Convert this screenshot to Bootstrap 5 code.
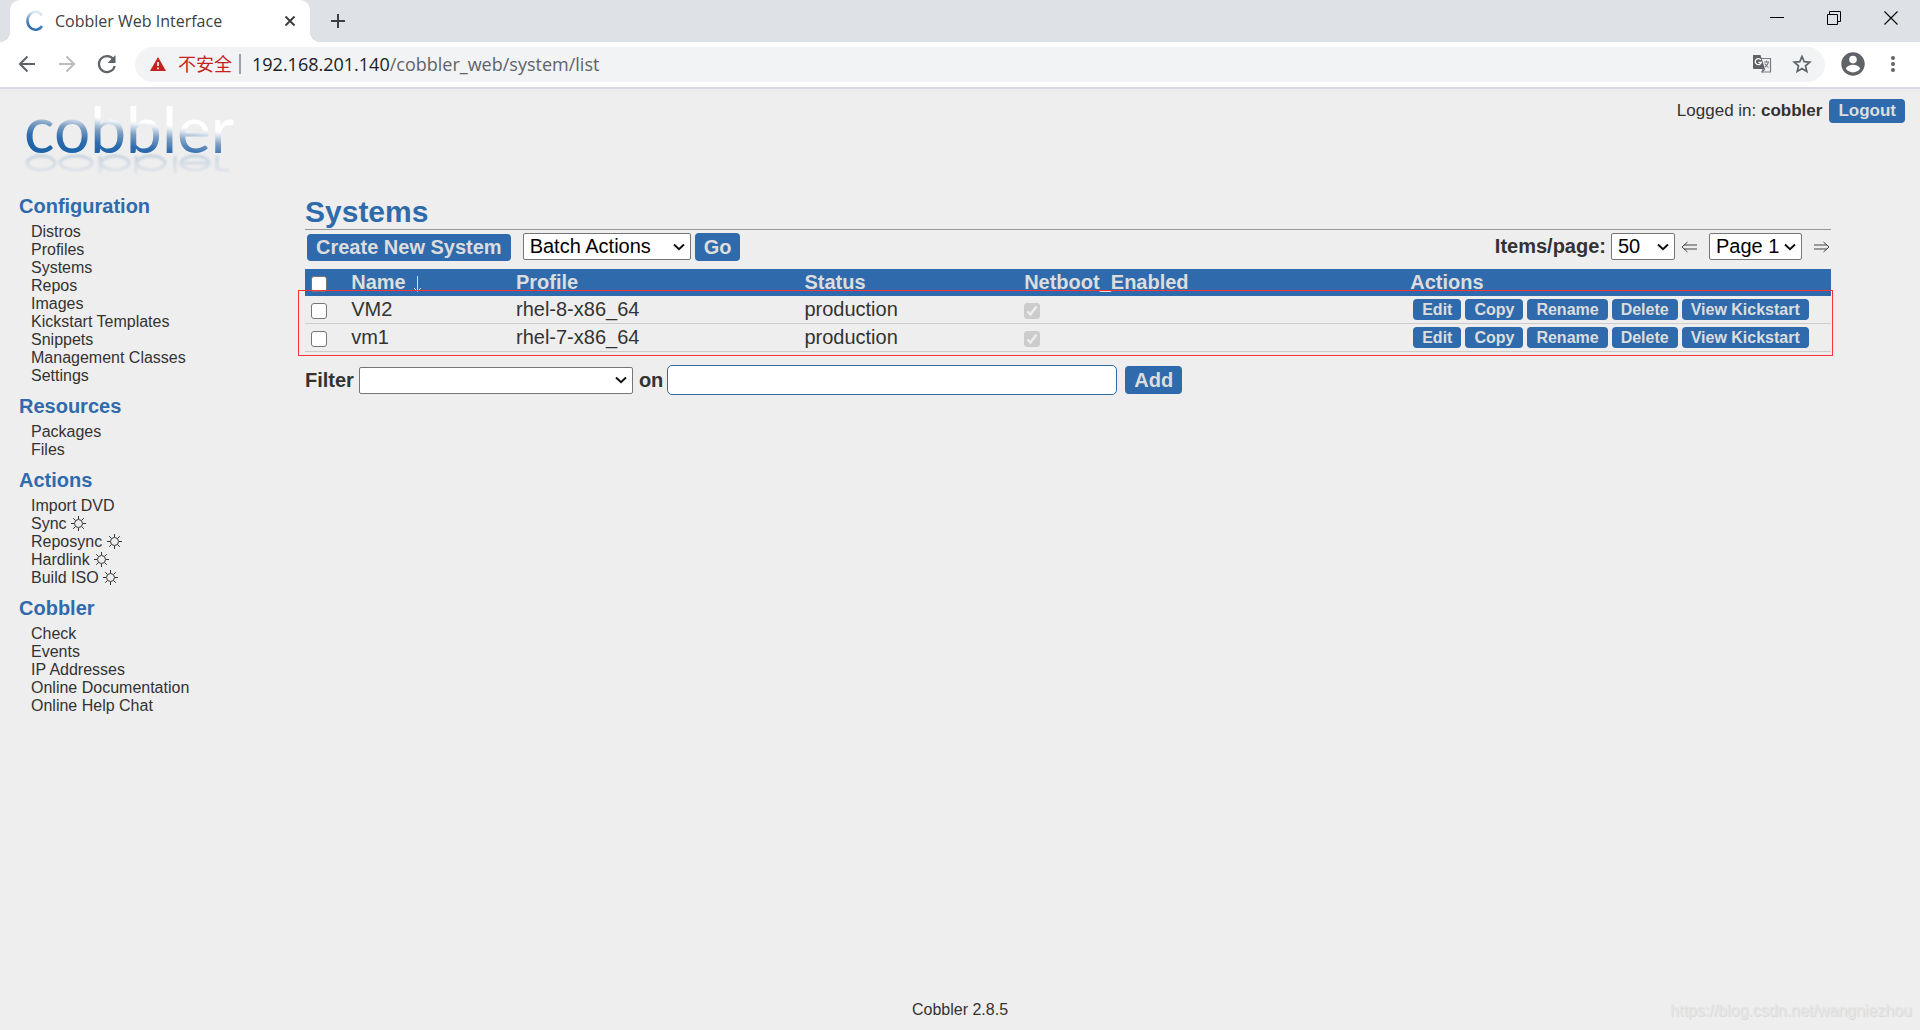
<!DOCTYPE html>
<html lang="en">
<head>
<meta charset="utf-8">
<meta name="viewport" content="width=device-width, initial-scale=1">
<title>Cobbler Web Interface</title>
<link href="https://cdn.jsdelivr.net/npm/bootstrap@5.3.0/dist/css/bootstrap.min.css" rel="stylesheet">
<style>
:root { --cob-blue: #2f6bac; --cob-bg: #eee; --cob-ink: #333; }
body { background: var(--cob-bg); color: var(--cob-ink); font: 16px/18px "Liberation Sans", Arial, sans-serif; }
svg { display: block; flex: none; }
.bare { border: 0; background: none; padding: 0; }

/* browser frame */
.chrome { font-family: "Open Sans", "Noto Sans CJK SC", sans-serif; }
.tabstrip { background: #dee1e6; height: 42px; padding-left: 10px; }
.tab-active { background: #fff; width: 300px; height: 42px; border-radius: 10px 10px 0 0; padding: 0 14px 0 15px; color: #3c4043; font-size: 16px; line-height: 20px; gap: 10px; }
.tab-active::before, .tab-active::after { content: ""; position: absolute; bottom: 0; width: 10px; height: 10px; }
.tab-active::before { left: -10px; background: radial-gradient(circle at 0 0, transparent 10px, #fff 10px); }
.tab-active::after { right: -10px; background: radial-gradient(circle at 100% 0, transparent 10px, #fff 10px); }
.win-controls { gap: 43px; padding-right: 22px; height: 36px; }
.toolbar { background: #fff; height: 47px; border-bottom: 2px solid #d9dae1; padding: 0 19px 1px 15px; }
.nav-icons { gap: 16px; margin-right: 16px; }
.omnibox { background: #f1f3f4; height: 35px; border-radius: 18px; padding: 0 13px 0 15px; font-size: 18px; line-height: 24px; }
.insecure { color: #c5221f; border-right: 2px solid #9aa0a6; line-height: 20px; padding-right: 7px; margin-right: 11px; }
.addr { color: #5f6368; }
.addr b { color: #202124; font-weight: 400; }

/* page */
.page-body { min-height: calc(100vh - 89px); }
.page-head { height: 106px; padding: 0 15px 0 20px; }
.btn-cob { background: var(--cob-blue); color: #ddd; font-weight: 700; border: 0; border-radius: 4px; padding: 0 9px; }
.btn-cob:hover { background: #265a93; color: #fff; }
.btn-out { font-size: 17px; line-height: 24px; }
.btn-row { font-size: 16px; line-height: 21px; }
.btn-big { font-size: 20px; line-height: 28px; }
.btn-new { margin: 1px 12px 0 2px; line-height: 27px; }
.session { font-size: 17px; line-height: 24px; gap: 7px; padding-top: 10px; }
.side { width: 305px; padding-left: 19px; }
.side h2 { color: var(--cob-blue); font-size: 20px; line-height: 23px; font-weight: 700; margin: 0 0 5px; }
.side ul { margin: 0 0 10px; padding-left: 12px; }
.side a { color: var(--cob-ink); text-decoration: none; }
.side li { height: 18px; }
.side svg { display: inline-block; vertical-align: -2px; }
.main-col { margin-right: 89px; font-size: 20px; line-height: 23px; }
.main-col h1 { color: var(--cob-blue); font-size: 30px; line-height: 34px; font-weight: 700; margin: 0; border-bottom: 1px solid #999; }
.tools { padding: 3px 0 8px; }
.tools .pager { gap: 5px; height: 27px; }
.pager .spaced { margin-left: 6px; }
.pick { appearance: none; border: 1px solid #767676; border-radius: 2px; height: 27px; padding: 0 22px 0 6px; font-size: 20px; line-height: 25px; color: #000;
  background: #fff url("data:image/svg+xml,%3Csvg xmlns='http://www.w3.org/2000/svg' width='12' height='8'%3E%3Cpath d='M1 1.5l5 4.7 5-4.7' fill='none' stroke='%23111' stroke-width='2'/%3E%3C/svg%3E") no-repeat right 5px center; }
.pick-batch { width: 168px; }
.pick-count { width: 64px; }
.pick-page { width: 93px; }
.pick-filter { width: 274px; margin: 0 6px 0 5px; }
.term { width: 450px; height: 30px; border: 1px solid var(--cob-blue); border-radius: 5px; background: #fff; padding: 0 6px; }
.tick { appearance: none; display: block; width: 16px; height: 16px; margin: 5px 0 0; border: 1px solid #767676; border-radius: 3px; background: #fff; }
.tick:checked { border-color: #ccc; background: #ccc url("data:image/svg+xml,%3Csvg xmlns='http://www.w3.org/2000/svg' viewBox='0 0 14 14'%3E%3Cpath d='M2.5 7.5l3 3 6-8' fill='none' stroke='%23eee' stroke-width='2.4'/%3E%3C/svg%3E") center / 14px no-repeat; }
.sys-table { width: 100%; table-layout: fixed; border-collapse: separate; border-spacing: 0; }
.sys-table th { background: var(--cob-blue); color: #ddd; height: 27px; padding: 2px 5px 0; vertical-align: top; }
.sys-table td { height: 28px; padding: 2px 5px 0; border-bottom: 1px solid #ccc; vertical-align: top; }
.sys-table th:first-child, .sys-table td:first-child { padding-left: 6px; }
.acts { gap: 4px; padding: 1px 0 0 3px; }
.redbox { border: 1px solid #f33; left: -7px; right: -2px; top: 21px; bottom: -4px; pointer-events: none; }
.filters { padding-top: 13px; font-weight: 700; }
.foot { padding-bottom: 11px; }
.stamp { right: 8px; bottom: 8px; color: #e5e5e5; text-shadow: 1px 1px 1px #d8d8d8; font-size: 16px; line-height: 22px; }
</style>
</head>
<body>
<header class="chrome">
  <div class="tabstrip d-flex">
    <div class="tab-active d-flex align-items-center position-relative">
      <svg width="20" height="22" viewBox="0 0 20 22"><defs><linearGradient id="fav" x1="0" y1="1" x2=".3" y2="0"><stop offset="0" stop-color="#1f5fa8"/><stop offset=".4" stop-color="#4a82bd"/><stop offset="1" stop-color="#dbe7f2"/></linearGradient></defs><path d="M17 5.500A8 9 0 1 0 17 16" fill="none" stroke="url(#fav)" stroke-width="2.600"/></svg>
      <span class="flex-grow-1 text-nowrap">Cobbler Web Interface</span>
      <button class="bare" type="button" aria-label="Close tab"><svg width="12" height="12" viewBox="0 0 12 12"><path d="M1.500 1.500l9 9M10.500 1.500l-9 9" stroke="#3c4043" stroke-width="2"/></svg></button>
    </div>
    <button class="bare ms-3 ps-1" type="button" aria-label="New tab"><svg width="16" height="16" viewBox="0 0 16 16"><path d="M8 1v14M1 8h14" stroke="#3c4043" stroke-width="2"/></svg></button>
    <div class="win-controls d-flex align-items-center ms-auto">
      <button class="bare" type="button" aria-label="Minimize"><svg width="14" height="14" viewBox="0 0 14 14"><path d="M0 6.500h14" stroke="#000"/></svg></button>
      <button class="bare" type="button" aria-label="Restore"><svg width="14" height="14" viewBox="0 0 14 14"><path d="M.5 3.500h10v10H.5zM2.500 3.500V.5h11v10h-3" fill="none" stroke="#000"/></svg></button>
      <button class="bare" type="button" aria-label="Close"><svg width="14" height="14" viewBox="0 0 14 14"><path d="M.5.5l13 13M13.500.5l-13 13" stroke="#000" stroke-width="1.100"/></svg></button>
    </div>
  </div>
  <div class="toolbar d-flex align-items-center">
    <div class="nav-icons d-flex">
      <button class="bare" type="button" aria-label="Back"><svg width="24" height="24" viewBox="0 0 24 24" fill="none" stroke="#5f6368" stroke-width="2"><path d="M20 12H5M12.500 4.500L5 12l7.500 7.500"/></svg></button>
      <button class="bare" type="button" aria-label="Forward"><svg width="24" height="24" viewBox="0 0 24 24" fill="none" stroke="#babcbe" stroke-width="2"><path d="M4 12h15M11.500 4.500L19 12l-7.500 7.500"/></svg></button>
      <button class="bare" type="button" aria-label="Reload"><svg width="24" height="24" viewBox="0 0 24 24"><path d="M18.500 7.500A8 8 0 1 0 19.700 14" fill="none" stroke="#5f6368" stroke-width="2.200"/><path d="M20.500 3v8h-8z" fill="#5f6368"/></svg></button>
    </div>
    <div class="omnibox d-flex align-items-center flex-grow-1">
      <svg class="me-2" width="16" height="14" viewBox="0 0 16 14"><path d="M8 0l8 14H0z" fill="#c5221f"/><path d="M8 5v4M8 10.500v1.700" stroke="#fff" stroke-width="1.600"/></svg>
      <span class="insecure ms-1">不安全</span>
      <span class="addr flex-grow-1"><b>192.168.201.140</b>/cobbler_web/system/list</span>
      <svg class="me-3" width="20" height="20" viewBox="0 0 20 20"><path d="M9 4.500h9.500v13.500H9" fill="none" stroke="#777b7f" stroke-width="1.200"/><path d="M1 1h7.500L13 15H2a1 1 0 0 1-1-1z" fill="#5f6368"/><path d="M8.800 6A3 3 0 1 0 9.200 8.300H6.500" fill="none" stroke="#fff" stroke-width="1.300"/><path d="M12 8h5M14.500 6.500V8M16.500 8q-.8 3-3.500 5M12.800 9.500q1.500 3 3.700 4M11 15l-1 3 3-3" fill="none" stroke="#777b7f" stroke-width="1.100"/></svg>
      <svg class="ms-1" width="20" height="20" viewBox="0 0 20 20"><path d="M10 2.500l2.200 5.200 5.600.5-4.300 3.700 1.300 5.500L10 14.500l-4.800 2.900 1.300-5.500L2.200 8.200l5.600-.5z" fill="none" stroke="#5f6368" stroke-width="1.700"/></svg>
    </div>
    <button class="bare ms-3" type="button" aria-label="Profile"><svg width="24" height="24" viewBox="0 0 24 24"><circle cx="12" cy="12" r="11.700" fill="#5f6368"/><circle cx="12" cy="7.600" r="3.800" fill="#fff"/><path d="M4.800 16.500c1.200-2.500 4.300-3.700 7.200-3.700s6 1.200 7.200 3.700a8.600 8.600 0 0 1-14.400 0z" fill="#fff"/></svg></button>
    <button class="bare ms-3 ps-1" type="button" aria-label="Menu"><svg width="16" height="18" viewBox="0 0 16 18" fill="#5f6368"><circle cx="8" cy="3" r="2"/><circle cx="8" cy="9" r="2"/><circle cx="8" cy="15" r="2"/></svg></button>
  </div>
</header>

<div class="page-body position-relative d-flex flex-column">
  <div class="page-head d-flex justify-content-between align-items-start">
    <a href="#" aria-label="cobbler home">
      <svg width="230" height="92" viewBox="0 0 230 92">
        <defs>
          <linearGradient id="ink" gradientUnits="userSpaceOnUse" x1="92" y1="66" x2="97" y2="24"><stop offset="0" stop-color="#1f63a8"/><stop offset=".25" stop-color="#2f6dae"/><stop offset=".55" stop-color="#7f9fc2"/><stop offset=".78" stop-color="#e6edf4"/><stop offset=".86" stop-color="#fff"/></linearGradient>
          <linearGradient id="fade" gradientUnits="userSpaceOnUse" x1="0" y1="64" x2="0" y2="86"><stop offset="0" stop-color="#c3d0de"/><stop offset="1" stop-color="#e3e7ec"/></linearGradient>
          <filter id="soft" x="-5%" y="-20%" width="110%" height="140%"><feGaussianBlur stdDeviation="1.300"/></filter>
        </defs>
        <text x="4" y="64" font-family="Lato, sans-serif" font-size="64" fill="url(#ink)">cobbler</text>
        <g filter="url(#soft)" fill="none" stroke="url(#fade)" stroke-width="3">
          <ellipse cx="21" cy="74" rx="14" ry="7"/><ellipse cx="56" cy="74" rx="16" ry="7"/><ellipse cx="95" cy="74" rx="14" ry="7"/><ellipse cx="131" cy="74" rx="14" ry="7"/><ellipse cx="175" cy="74" rx="14" ry="7"/>
          <path d="M80 67v18M116 67v18M155 67v18M197 67v13q6 2 12 1M162 74h26"/>
        </g>
      </svg>
    </a>
    <div class="session d-flex"><span>Logged in: <b>cobbler</b></span><button class="btn-cob btn-out" type="button">Logout</button></div>
  </div>

  <div class="d-flex flex-grow-1">
    <nav class="side flex-shrink-0">
      <h2>Configuration</h2>
      <ul class="list-unstyled">
        <li><a href="#">Distros</a></li><li><a href="#">Profiles</a></li><li><a href="#">Systems</a></li><li><a href="#">Repos</a></li><li><a href="#">Images</a></li><li><a href="#">Kickstart Templates</a></li><li><a href="#">Snippets</a></li><li><a href="#">Management Classes</a></li><li><a href="#">Settings</a></li>
      </ul>
      <h2>Resources</h2>
      <ul class="list-unstyled"><li><a href="#">Packages</a></li><li><a href="#">Files</a></li></ul>
      <h2>Actions</h2>
      <svg class="d-none"><symbol id="gear" viewBox="0 0 15 15"><circle cx="7.500" cy="7.500" r="4" fill="none" stroke="#333"/><path d="M7.500 0v3M7.500 12v3M0 7.500h3M12 7.500h3M2.200 2.200l2 2M10.800 10.800l2 2M12.800 2.200l-2 2M4.200 10.800l-2 2" stroke="#333"/></symbol></svg>
      <ul class="list-unstyled">
        <li><a href="#">Import DVD</a></li>
        <li><a href="#">Sync <svg width="15" height="15"><use href="#gear"/></svg></a></li>
        <li><a href="#">Reposync <svg width="15" height="15"><use href="#gear"/></svg></a></li>
        <li><a href="#">Hardlink <svg width="15" height="15"><use href="#gear"/></svg></a></li>
        <li><a href="#">Build ISO <svg width="15" height="15"><use href="#gear"/></svg></a></li>
      </ul>
      <h2>Cobbler</h2>
      <ul class="list-unstyled"><li><a href="#">Check</a></li><li><a href="#">Events</a></li><li><a href="#">IP Addresses</a></li><li><a href="#">Online Documentation</a></li><li><a href="#">Online Help Chat</a></li></ul>
    </nav>

    <main class="main-col flex-grow-1">
      <h1>Systems</h1>
      <div class="tools d-flex justify-content-between">
        <div class="d-flex align-items-start">
          <button class="btn-cob btn-big btn-new" type="button">Create New System</button>
          <select class="pick pick-batch" aria-label="Batch actions"><option>Batch Actions</option></select>
          <button class="btn-cob btn-big ms-1" type="button">Go</button>
        </div>
        <div class="pager d-flex align-items-center">
          <label class="fw-bold" for="count">Items/page:</label>
          <select class="pick pick-count" id="count"><option>50</option></select>
          <svg width="18" height="12" viewBox="0 0 18 12"><path d="M17 4H4M17 8H4M7.500 1L2 6l5.500 5" fill="none" stroke="#444"/></svg>
          <select class="pick pick-page spaced" aria-label="Page"><option>Page 1</option></select>
          <svg class="spaced" width="18" height="12" viewBox="0 0 18 12"><path d="M1 4h13M1 8h13M10.500 1L16 6l-5.500 5" fill="none" stroke="#444"/></svg>
        </div>
      </div>
      <div class="position-relative">
        <table class="sys-table">
          <colgroup><col style="width:2.7%"><col style="width:10.8%"><col style="width:18.9%"><col style="width:14.4%"><col style="width:25.3%"><col></colgroup>
          <thead>
            <tr><th><input class="tick" type="checkbox" aria-label="Select all"></th><th>Name <svg class="d-inline-block align-text-bottom" width="12" height="18" viewBox="0 0 12 18"><path d="M6.500 1v15M3 13l3.500 3.500L10 13" fill="none" stroke="#ddd"/></svg></th><th>Profile</th><th>Status</th><th>Netboot_Enabled</th><th>Actions</th></tr>
          </thead>
          <tbody>
            <tr><td><input class="tick" type="checkbox" aria-label="Select VM2"></td><td>VM2</td><td>rhel-8-x86_64</td><td>production</td><td><input class="tick" type="checkbox" checked disabled aria-label="Netboot enabled for VM2"></td>
              <td><div class="acts d-flex"><button class="btn-cob btn-row" type="button">Edit</button><button class="btn-cob btn-row" type="button">Copy</button><button class="btn-cob btn-row" type="button">Rename</button><button class="btn-cob btn-row" type="button">Delete</button><button class="btn-cob btn-row text-nowrap" type="button">View Kickstart</button></div></td></tr>
            <tr><td><input class="tick" type="checkbox" aria-label="Select vm1"></td><td>vm1</td><td>rhel-7-x86_64</td><td>production</td><td><input class="tick" type="checkbox" checked disabled aria-label="Netboot enabled for vm1"></td>
              <td><div class="acts d-flex"><button class="btn-cob btn-row" type="button">Edit</button><button class="btn-cob btn-row" type="button">Copy</button><button class="btn-cob btn-row" type="button">Rename</button><button class="btn-cob btn-row" type="button">Delete</button><button class="btn-cob btn-row text-nowrap" type="button">View Kickstart</button></div></td></tr>
          </tbody>
        </table>
        <div class="redbox position-absolute"></div>
      </div>
      <div class="filters d-flex align-items-center">
        <label for="field">Filter</label>
        <select class="pick pick-filter" id="field"><option></option></select>
        <label for="term">on</label>
        <input class="term ms-1 me-2" id="term" type="text">
        <button class="btn-cob btn-big" type="button">Add</button>
      </div>
    </main>
  </div>
  <footer class="foot text-center">Cobbler 2.8.5</footer>
  <div class="stamp position-absolute">https://blog.csdn.net/wangniezhou</div>
</div>
<script src="https://cdn.jsdelivr.net/npm/bootstrap@5.3.0/dist/js/bootstrap.bundle.min.js"></script>
</body>
</html>
